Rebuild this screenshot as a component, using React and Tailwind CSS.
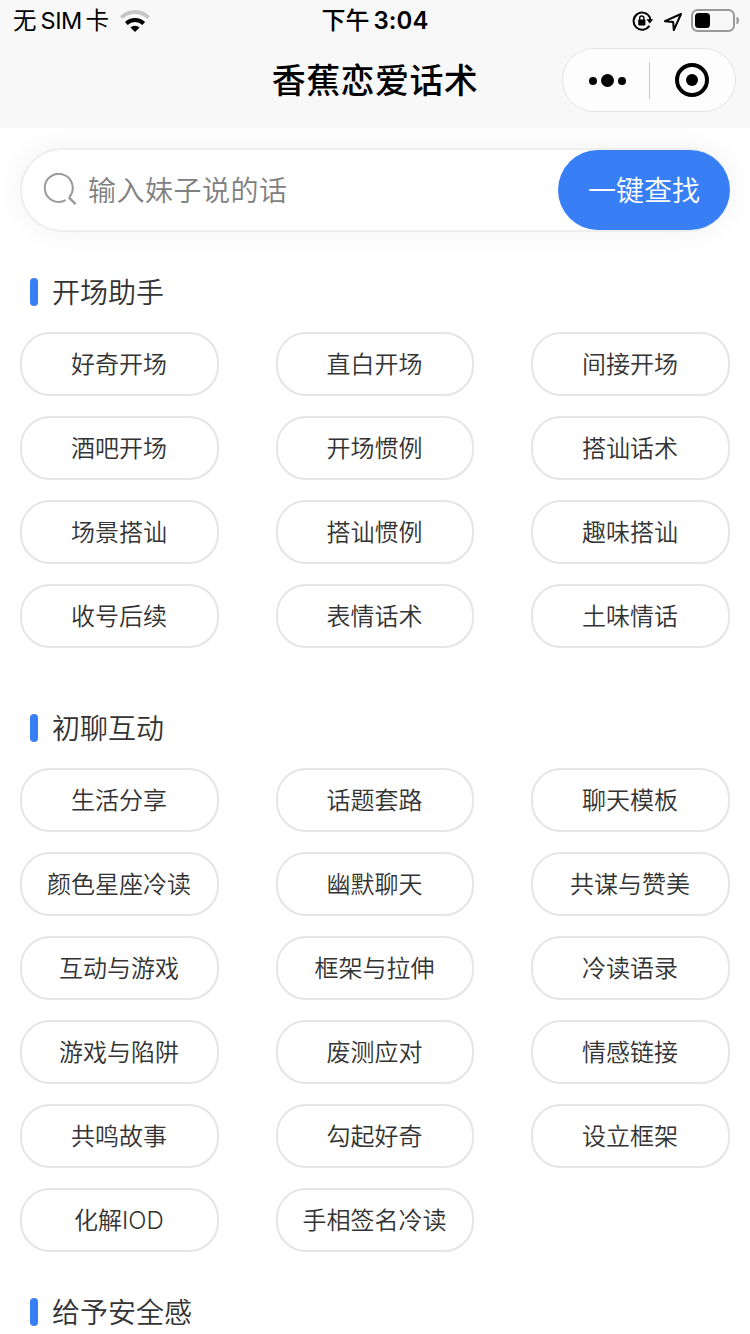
import React from 'react';

const SECTIONS = [
  {
    title: '开场助手',
    className: 'pb-[66px]',
    items: [
      '好奇开场', '直白开场', '间接开场',
      '酒吧开场', '开场惯例', '搭讪话术',
      '场景搭讪', '搭讪惯例', '趣味搭讪',
      '收号后续', '表情话术', '土味情话',
    ],
  },
  {
    title: '初聊互动',
    className: 'pb-[46px]',
    items: [
      '生活分享', '话题套路', '聊天模板',
      '颜色星座冷读', '幽默聊天', '共谋与赞美',
      '互动与游戏', '框架与拉伸', '冷读语录',
      '游戏与陷阱', '废测应对', '情感链接',
      '共鸣故事', '勾起好奇', '设立框架',
      '化解IOD', '手相签名冷读',
    ],
  },
  { title: '给予安全感', className: '', items: [] },
];

function WifiIcon() {
  return (
    <svg className="w-[30px] h-[22px]" viewBox="0 0 30 22" fill="none">
      <path d="M1.4 7.6A19.5 19.5 0 0 1 28.6 7.6" stroke="#c6c6c6" strokeWidth="4" />
      <path d="M6.3 13.5A12.4 12.4 0 0 1 23.7 13.5" stroke="#000" strokeWidth="4" />
      <path d="M15 22l-4.6-4.4a6.6 6.6 0 0 1 9.2 0z" fill="#000" />
    </svg>
  );
}

function RotationLockIcon() {
  return (
    <svg className="w-[22px] h-5" viewBox="0 0 22 20" fill="none">
      <path d="M17.4 14.8A8.6 8.6 0 1 1 18 6.6" stroke="#000" strokeWidth="2" />
      <path d="M18 6.2v3" stroke="#000" strokeWidth="2" />
      <path d="M14.4 8.2h6.8L17.8 12.6z" fill="#000" />
      <rect x="6.2" y="8.6" width="7.2" height="5.8" rx="0.8" fill="#000" />
      <path d="M7.7 9V7.1a2.1 2.1 0 0 1 4.2 0V9" stroke="#000" strokeWidth="1.4" />
    </svg>
  );
}

function LocationIcon() {
  return (
    <svg className="block w-[20px] h-[20px]" viewBox="0 0 20 20" fill="none">
      <path d="M18 2L1.9 9.2l8.3.8.6 8.1z" stroke="#000" strokeWidth="2" strokeLinejoin="round" />
    </svg>
  );
}

function BatteryIcon() {
  return (
    <svg className="block w-12 h-[23px]" viewBox="0 0 48 23" fill="none">
      <rect x="1" y="1" width="42" height="21" rx="5.5" stroke="#999" strokeWidth="2" />
      <rect x="4" y="4" width="15" height="15" rx="3.5" fill="#000" />
      <path d="M46 8v7c2-.9 2-6.1 0-7z" fill="#999" stroke="#999" />
    </svg>
  );
}

function SearchIcon() {
  return (
    <svg className="w-[34px] h-[34px] shrink-0" viewBox="0 0 34 34" fill="none">
      <path d="M21.6 27.1A14 14 0 1 1 25.2 24.2" stroke="#999" strokeWidth="2" />
      <path d="M24.8 24.4L31.6 31.2" stroke="#999" strokeWidth="2.4" />
    </svg>
  );
}

function StatusBar() {
  return (
    <div className="grid h-10 grid-cols-3 items-center text-black">
      <div className="flex items-center pl-[13px] text-[23.5px] leading-10">
        <span>无</span>
        <span className="ml-[4px] w-[43px] tracking-[-0.4px] font-['Inter']">SIM</span>
        <span className="ml-[2px]">卡</span>
        <span className="ml-[11px]"><WifiIcon /></span>
      </div>
      <div className="flex items-center justify-center text-[24px] leading-10 font-medium">
        <span className="pt-px">下午</span>
        <span className="ml-[4px] pt-px tracking-[0.1px] font-['Inter'] font-semibold">3:04</span>
      </div>
      <div className="flex items-center justify-end pr-[11px]">
        <RotationLockIcon />
        <span className="ml-[9px] mr-[8px] pt-0.5"><LocationIcon /></span>
        <span className="-mt-px"><BatteryIcon /></span>
      </div>
    </div>
  );
}

function NavBar() {
  return (
    <div className="relative flex h-[88px] justify-center">
      <h1 className="mt-[17px] text-[34px] leading-[48px] tracking-[0.4px] font-medium text-black">香蕉恋爱话术</h1>
      <div className="absolute right-[14px] top-2 flex h-16 w-[174px] items-center rounded-full border border-[#e5e5e5] bg-[#fdfdfd]">
        <div className="flex w-[86px] items-center justify-center gap-1 pl-[3px] pt-px">
          <i className="size-2 rounded-full bg-black" />
          <i className="size-[13px] rounded-full bg-black" />
          <i className="size-2 rounded-full bg-black" />
        </div>
        <div className="h-[37px] w-px bg-[#c8c8c8]" />
        <div className="flex flex-1 justify-center pb-px pr-px">
          <div className="flex size-[34px] items-center justify-center rounded-full border-4 border-black">
            <i className="size-3 rounded-full bg-black" />
          </div>
        </div>
      </div>
    </div>
  );
}

function SearchBar() {
  return (
    <div className="mx-5 mt-5 flex h-[84px] items-center rounded-[42px] border-2 border-r-0 border-[#eee] bg-white pl-[22px] shadow-[0_0_30px_rgba(0,0,0,0.06)]">
      <SearchIcon />
      <span className="ml-[10px] flex-1 pt-0.5 text-[28px] leading-10 tracking-[0.5px] text-[#808080] font-[350]">输入妹子说的话</span>
      <button className="h-20 w-[172px] rounded-[40px] bg-[#387ff6] pt-0.5 text-[28px] leading-10 text-white font-[350]">一键查找</button>
    </div>
  );
}

function Section({ title, items, className }) {
  return (
    <section className={className}>
      <div className="flex h-7 items-center pl-[30px]">
        <i className="h-7 w-2 rounded-full bg-[#387ff6]" />
        <h2 className="ml-[14px] pt-0.5 text-[28px] leading-7 text-[#333] font-[350]">{title}</h2>
      </div>
      {items.length > 0 && (
        <div className="mx-5 mt-[26px] grid grid-cols-[28%_28%_28%] justify-between gap-y-5">
          {items.map((item) => (
            <button
              key={item}
              className="h-16 rounded-[30px] border-2 border-[#e5e5e5] pt-0.5 pr-px text-center text-[24px] leading-[58px] text-[#333] font-[350]"
            >
              {item}
            </button>
          ))}
        </div>
      )}
    </section>
  );
}

export default function App() {
  return (
    <div className="h-[1334px] w-[750px] overflow-hidden bg-white font-['Inter','Noto_Sans_CJK_SC',sans-serif]">
      <header className="relative bg-[#f8f8f8]">
        <StatusBar />
        <NavBar />
      </header>
      <SearchBar />
      <main className="mt-[46px]">
        {SECTIONS.map((section) => (
          <Section key={section.title} {...section} />
        ))}
      </main>
    </div>
  );
}
